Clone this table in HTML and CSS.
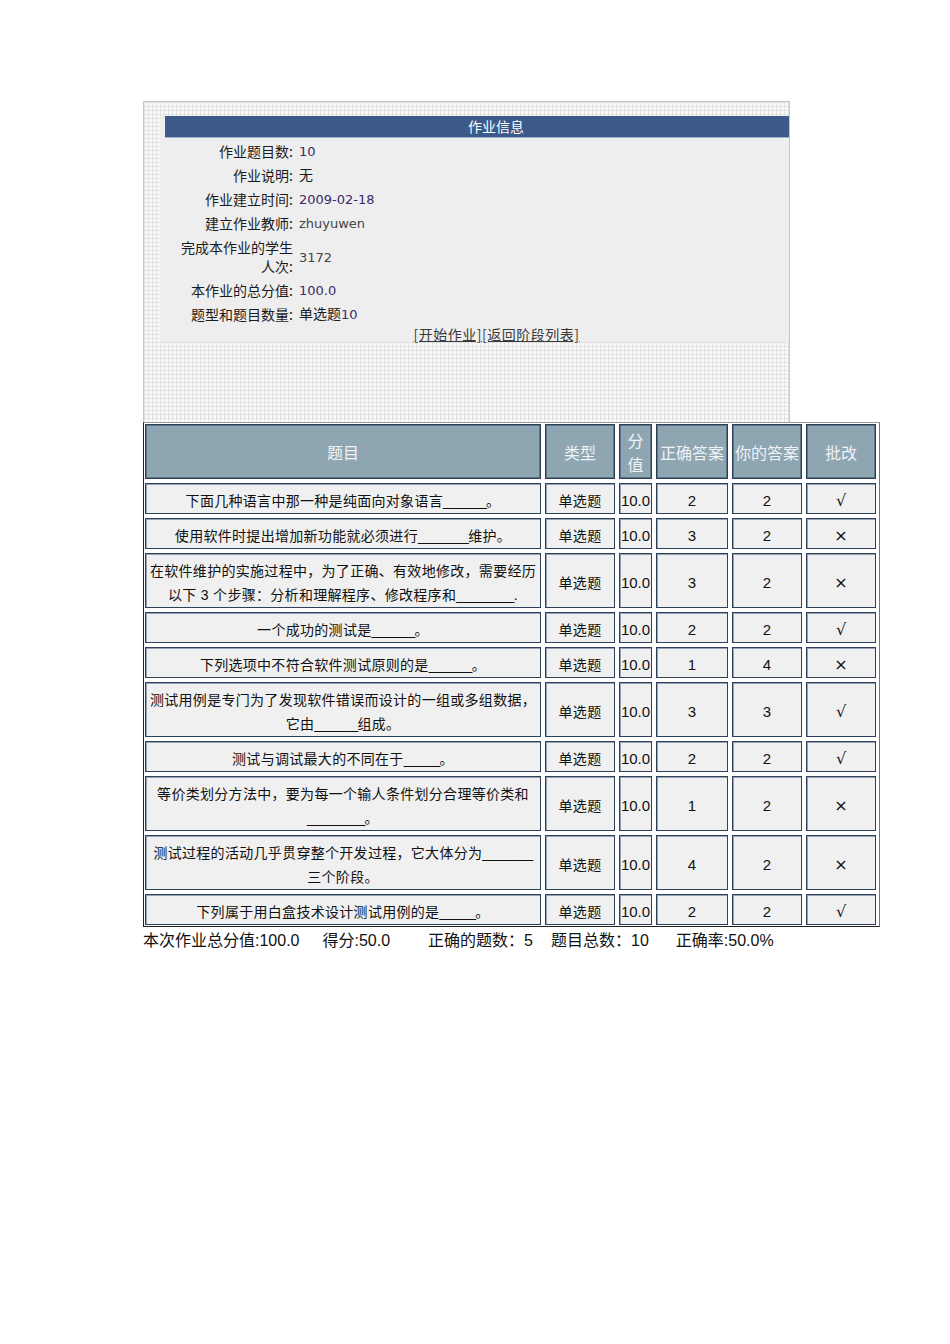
FILE: index.html
```html
<!DOCTYPE html>
<html lang="zh-CN">
<head>
<meta charset="utf-8">
<title>作业信息</title>
<link rel="stylesheet" href="styles.css">
</head>
<body>
<div class="page">
  <div class="panel">
    <div class="info">
      <div class="info-title">作业信息</div>
      <div class="info-grid">
        <div class="lbl">作业题目数:</div><div class="val num">10</div>
        <div class="lbl">作业说明:</div><div class="val">无</div>
        <div class="lbl">作业建立时间:</div><div class="val num">2009-02-18</div>
        <div class="lbl">建立作业教师:</div><div class="val grey">zhuyuwen</div>
        <div class="lbl">完成本作业的学生人次:</div><div class="val grey">3172</div>
        <div class="lbl">本作业的总分值:</div><div class="val num">100.0</div>
        <div class="lbl">题型和题目数量:</div><div class="val">单选题<span class="num">10</span></div>
      </div>
      <div class="links"><a href="#">[开始作业]</a><a href="#">[返回阶段列表]</a></div>
    </div>
  </div>

  <div class="qtable">
    <div class="c h">题目</div>
    <div class="c h">类型</div>
    <div class="c h"><span>分<br>值</span></div>
    <div class="c h">正确答案</div>
    <div class="c h">你的答案</div>
    <div class="c h">批改</div>

    <div class="c"><span>下面几种语言中那一种是纯面向对象语言<u class="bl">______</u>。</span></div>
    <div class="c">单选题</div><div class="c n">10.0</div><div class="c n">2</div><div class="c n">2</div><div class="c m">√</div>

    <div class="c"><span>使用软件时提出增加新功能就必须进行<u class="bl">_______</u>维护。</span></div>
    <div class="c">单选题</div><div class="c n">10.0</div><div class="c n">3</div><div class="c n">2</div><div class="c m">×</div>

    <div class="c"><span>在软件维护的实施过程中，为了正确、有效地修改，需要经历<br>以下 3 个步骤：分析和理解程序、修改程序和<u class="bl">________</u>.</span></div>
    <div class="c">单选题</div><div class="c n">10.0</div><div class="c n">3</div><div class="c n">2</div><div class="c m">×</div>

    <div class="c"><span>一个成功的测试是<u class="bl">______</u>。</span></div>
    <div class="c">单选题</div><div class="c n">10.0</div><div class="c n">2</div><div class="c n">2</div><div class="c m">√</div>

    <div class="c"><span>下列选项中不符合软件测试原则的是<u class="bl">______</u>。</span></div>
    <div class="c">单选题</div><div class="c n">10.0</div><div class="c n">1</div><div class="c n">4</div><div class="c m">×</div>

    <div class="c"><span>测试用例是专门为了发现软件错误而设计的一组或多组数据，<br>它由<u class="bl">______</u>组成。</span></div>
    <div class="c">单选题</div><div class="c n">10.0</div><div class="c n">3</div><div class="c n">3</div><div class="c m">√</div>

    <div class="c"><span>测试与调试最大的不同在于<u class="bl">_____</u>。</span></div>
    <div class="c">单选题</div><div class="c n">10.0</div><div class="c n">2</div><div class="c n">2</div><div class="c m">√</div>

    <div class="c"><span>等价类划分方法中，要为每一个输人条件划分合理等价类和<br><u class="bl">________</u>。</span></div>
    <div class="c">单选题</div><div class="c n">10.0</div><div class="c n">1</div><div class="c n">2</div><div class="c m">×</div>

    <div class="c"><span>测试过程的活动几乎贯穿整个开发过程，它大体分为<u class="bl">_______</u><br>三个阶段。</span></div>
    <div class="c">单选题</div><div class="c n">10.0</div><div class="c n">4</div><div class="c n">2</div><div class="c m">×</div>

    <div class="c"><span>下列属于用白盒技术设计测试用例的是<u class="bl">_____</u>。</span></div>
    <div class="c">单选题</div><div class="c n">10.0</div><div class="c n">2</div><div class="c n">2</div><div class="c m">√</div>
  </div>

  <div class="summary">
    <span>本次作业总分值:100.0</span>
    <span class="s1">得分:50.0</span>
    <span class="s2">正确的题数：5</span>
    <span class="s3">题目总数：10</span>
    <span class="s4">正确率:50.0%</span>
  </div>
</div>
</body>
</html>
```

FILE: styles.css
```css
html, body {
  margin: 0;
  padding: 0;
  background: #ffffff;
}

body {
  font-family: "Liberation Sans", "Noto Sans CJK SC", sans-serif;
  color: #111111;
}

.page {
  padding: 101px 0 0 143px;
}

/* ---------- info panel ---------- */
.panel {
  box-sizing: border-box;
  width: 647px;
  height: 321px;
  padding: 14px 0 0 16px;
  border: 1px solid #c6c6c6;
  border-bottom: none;
  background-color: #f9f9f9;
  background-image:
    linear-gradient(90deg, #e1e1e1 1px, transparent 1px),
    linear-gradient(#e1e1e1 1px, transparent 1px);
  background-size: 4px 4px;
}

.info {
  background: #eeeeee;
}

.info-title {
  margin-left: 5px;
  height: 21px;
  line-height: 21px;
  padding-left: 38px;
  background: #3b5a89;
  border-bottom: 1px solid #9fb3d3;
  color: #ffffff;
  font-size: 14px;
  text-align: center;
  font-family: "Noto Sans CJK SC", sans-serif;
}

.info-grid {
  display: grid;
  grid-template-columns: 118px auto;
  column-gap: 6px;
  padding: 1px 0 0 15px;
  align-items: center;
}

.lbl {
  text-align: right;
  font-size: 14px;
  line-height: 19px;
  padding: 3px 0 2px;
  color: #1a1a1a;
  font-family: "Noto Sans CJK SC", sans-serif;
}

.val {
  font-size: 14px;
  line-height: 19px;
  padding: 3px 0 2px;
  color: #1a1a1a;
  font-family: "DejaVu Sans", "Noto Sans CJK SC", sans-serif;
}

.val.num, .val .num {
  color: #3a2a6c;
  font-size: 13px;
}

.val.grey {
  color: #444444;
  font-size: 13px;
}

.links {
  text-align: center;
  padding-left: 44px;
  line-height: 16px;
  font-size: 14px;
  letter-spacing: 0.5px;
  font-family: "Noto Sans CJK SC", sans-serif;
}

.links a {
  color: #3a3a3a;
  text-decoration: underline;
}

/* ---------- question table ---------- */
.qtable {
  display: grid;
  width: max-content;
  grid-template-columns: 396px 70px 33px 72px 70px 70px;
  column-gap: 4px;
  row-gap: 4px;
  padding: 1px 3px 1px 1px;
  border: 1px solid #777777;
  border-top-color: #9a9a9a;
  border-left-color: #222222;
  border-bottom-color: #222222;
}

.c {
  box-sizing: border-box;
  display: flex;
  align-items: center;
  justify-content: center;
  text-align: center;
  min-height: 31px;
  padding: 5px 2px 0;
  line-height: 24px;
  font-size: 14px;
  letter-spacing: 0.3px;
  background: #f0f0f0;
  border: 1px solid #2f405a;
  box-shadow: inset 1px 1px 0 #93a3b5;
  color: #111111;
}

.c.h {
  background: #8ea5b2;
  color: #eef3f6;
  font-size: 16px;
  letter-spacing: 0;
  border-color: #2c3d55;
  box-shadow: inset 0 0 0 1px #5d7388;
}

.c.n {
  font-size: 15px;
  letter-spacing: 0;
}

.c.m {
  font-size: 16px;
  letter-spacing: 0;
  font-family: "DejaVu Sans", sans-serif;
}

.bl {
  text-decoration: none;
  letter-spacing: -0.6px;
}

/* ---------- summary ---------- */
.summary {
  margin-top: 5px;
  font-size: 16px;
  line-height: 18px;
  display: flex;
  color: #111111;
}

.summary .s1 { margin-left: 23px; }
.summary .s2 { margin-left: 38px; }
.summary .s3 { margin-left: 18px; }
.summary .s4 { margin-left: 27px; }
```
